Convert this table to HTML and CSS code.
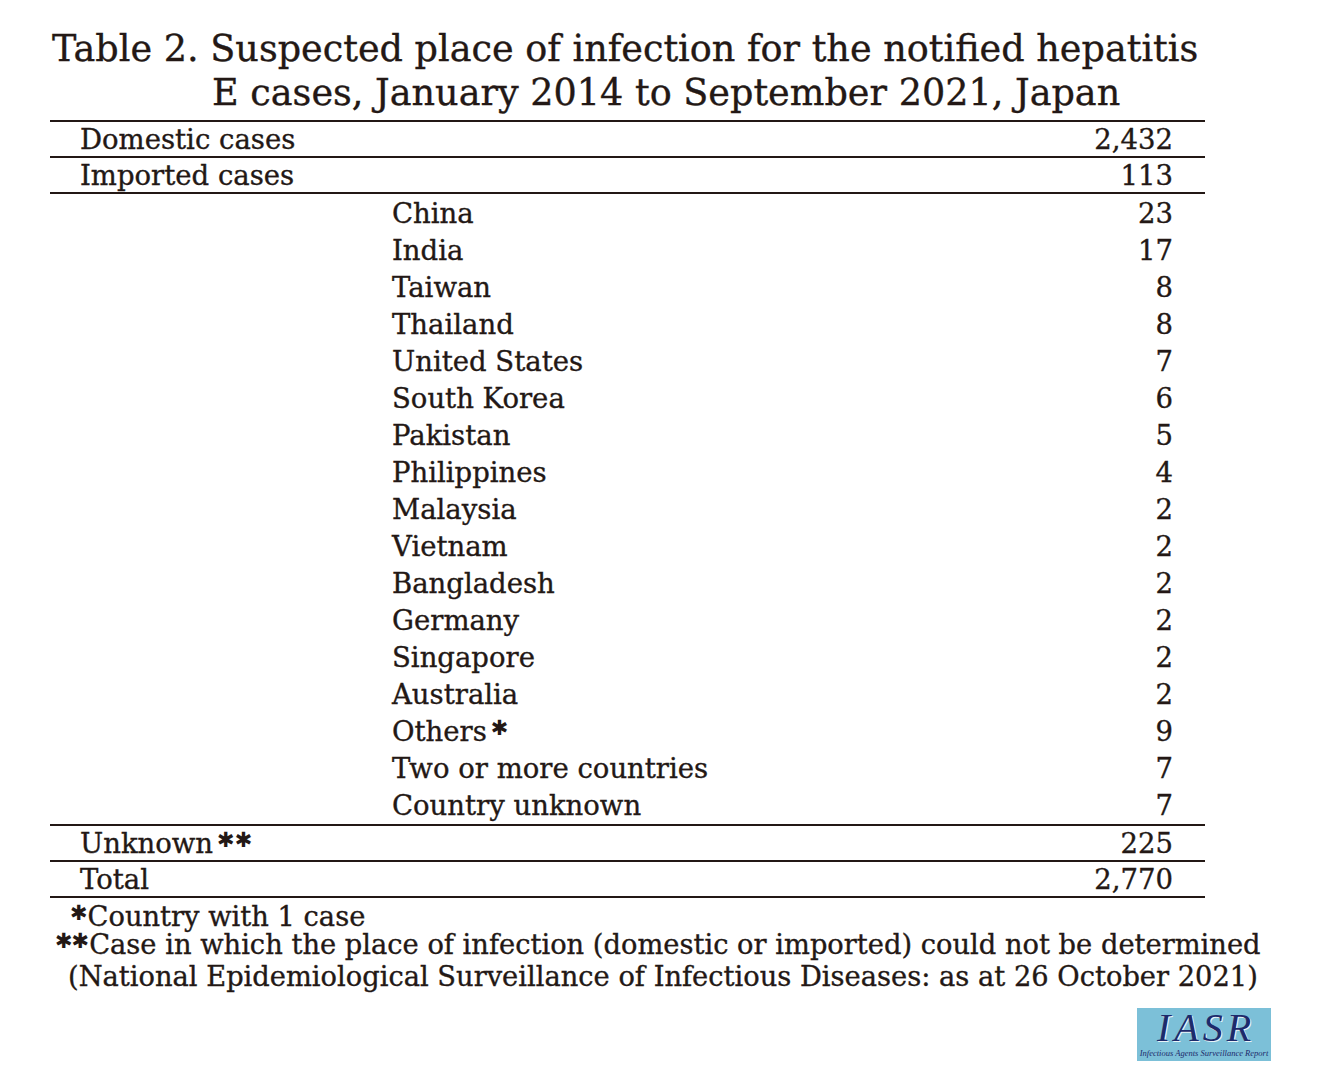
FILE: index.html
```html
<!DOCTYPE html>
<html>
<head>
<meta charset="utf-8">
<link rel="stylesheet" href="styles.css">
</head>
<body>
<div class="page">
  <h1 class="title">Table 2. Suspected place of infection for the notified hepatitis E cases, January 2014 to September 2021, Japan</h1>
  <div class="table">
    <div class="row main"><span class="label">Domestic cases</span><span class="num">2,432</span></div>
    <div class="row main"><span class="label">Imported cases</span><span class="num">113</span></div>
    <div class="sub">
      <div class="row country"><span class="label">China</span><span class="num">23</span></div>
      <div class="row country"><span class="label">India</span><span class="num">17</span></div>
      <div class="row country"><span class="label">Taiwan</span><span class="num">8</span></div>
      <div class="row country"><span class="label">Thailand</span><span class="num">8</span></div>
      <div class="row country"><span class="label">United States</span><span class="num">7</span></div>
      <div class="row country"><span class="label">South Korea</span><span class="num">6</span></div>
      <div class="row country"><span class="label">Pakistan</span><span class="num">5</span></div>
      <div class="row country"><span class="label">Philippines</span><span class="num">4</span></div>
      <div class="row country"><span class="label">Malaysia</span><span class="num">2</span></div>
      <div class="row country"><span class="label">Vietnam</span><span class="num">2</span></div>
      <div class="row country"><span class="label">Bangladesh</span><span class="num">2</span></div>
      <div class="row country"><span class="label">Germany</span><span class="num">2</span></div>
      <div class="row country"><span class="label">Singapore</span><span class="num">2</span></div>
      <div class="row country"><span class="label">Australia</span><span class="num">2</span></div>
      <div class="row country"><span class="label">Others<span class="ast">✱</span></span><span class="num">9</span></div>
      <div class="row country"><span class="label">Two or more countries</span><span class="num">7</span></div>
      <div class="row country"><span class="label">Country unknown</span><span class="num">7</span></div>
    </div>
    <div class="row main"><span class="label">Unknown<span class="ast">✱✱</span></span><span class="num">225</span></div>
    <div class="row main last"><span class="label">Total</span><span class="num">2,770</span></div>
  </div>
  <div class="notes">
    <p class="note n1"><span class="mark">✱</span>Country with 1 case</p>
    <p class="note n2"><span class="mark">✱✱</span>Case in which the place of infection (domestic or imported) could not be determined</p>
    <p class="note n3">(National Epidemiological Surveillance of Infectious Diseases: as at 26 October 2021)</p>
  </div>
  <div class="logo-row">
    <div class="logo">
      <span class="logo-main">IASR</span>
      <span class="logo-sub">Infectious Agents Surveillance Report</span>
    </div>
  </div>
</div>
</body>
</html>
```
FILE: styles.css
```css
html, body {
  margin: 0;
  padding: 0;
  background: #ffffff;
}
body {
  font-family: "DejaVu Serif", "Liberation Serif", serif;
  color: #231815;
  -webkit-text-stroke: 0.35px #231815;
}
.page {
  width: 1321px;
  padding-top: 27px;
}
.title {
  margin: 0 0 0 52px;
  width: 1160px;
  font-weight: normal;
  font-size: 36.6px;
  line-height: 44px;
  padding-left: 160px;
  text-indent: -160px;
  box-sizing: border-box;
}
.table {
  margin-left: 50px;
  width: 1155px;
  margin-top: 5px;
  font-size: 27.5px;
}
.row {
  display: flex;
  justify-content: space-between;
  align-items: center;
}
.main {
  border-top: 2px solid #231815;
  height: 33px;
  padding-left: 30px;
  padding-right: 32px;
  padding-bottom: 1px;
  box-sizing: content-box;
}
.main.last {
  border-bottom: 2px solid #231815;
  height: 34px;
  padding-bottom: 0;
}
.sub {
  border-top: 2px solid #231815;
  padding: 0 0 1px;
}
.country {
  height: 37px;
  padding-left: 342px;
  padding-right: 32px;
}
.ast, .mark {
  font-family: "DejaVu Sans", sans-serif;
  font-size: 21px;
  line-height: 0;
  position: relative;
  top: -6px;
  -webkit-text-stroke: 0;
}
.ast {
  margin-left: 4px;
}
.mark {
  margin-right: 1px;
  letter-spacing: -1px;
}
.notes {
  margin-left: 55px;
  font-size: 27.3px;
  margin-top: 5px;
}
.note {
  margin: 0;
  line-height: 28px;
}
.n1 { padding-left: 15px; }
.n3 { padding-left: 13px; line-height: 35px; }
.logo-row {
  display: flex;
  justify-content: flex-end;
  padding-right: 50px;
  margin-top: 14px;
}
.logo {
  width: 134px;
  height: 53px;
  background: #7cc0d8;
  display: flex;
  flex-direction: column;
  align-items: center;
  -webkit-text-stroke: 0;
}
.logo-main {
  font-family: "Liberation Serif", serif;
  font-style: italic;
  font-size: 40px;
  line-height: 40px;
  color: #1d2a6b;
  letter-spacing: 4px;
  margin-left: 4px;
  text-shadow: 1px 1px 0 #e8f4f8;
}
.logo-sub {
  font-family: "Liberation Serif", serif;
  font-style: italic;
  font-size: 8.5px;
  line-height: 10px;
  color: #1d2a6b;
  white-space: nowrap;
}
```
